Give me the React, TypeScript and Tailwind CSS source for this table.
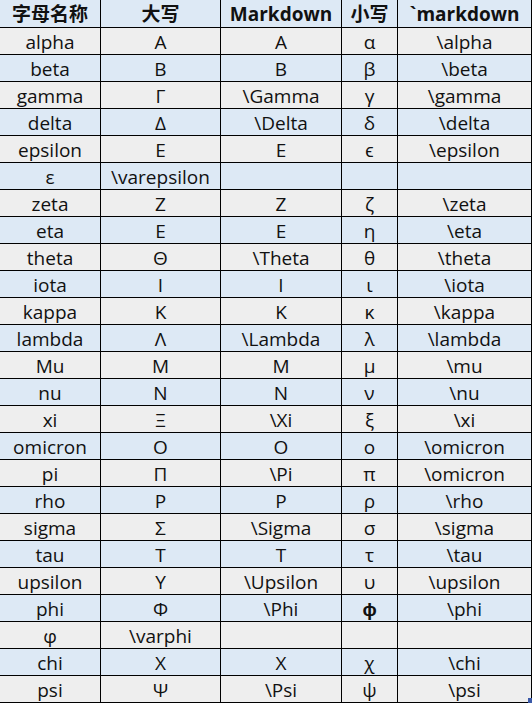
import React from "react";

type Row = [string, string, string, string, string];

const rows: Row[] = [
  ["alpha", "Α", "A", "α", "\\alpha"],
  ["beta", "Β", "B", "β", "\\beta"],
  ["gamma", "Γ", "\\Gamma", "γ", "\\gamma"],
  ["delta", "Δ", "\\Delta", "δ", "\\delta"],
  ["epsilon", "Ε", "E", "ϵ", "\\epsilon"],
  ["ε", "\\varepsilon", "", "", ""],
  ["zeta", "Ζ", "Z", "ζ", "\\zeta"],
  ["eta", "Ε", "E", "η", "\\eta"],
  ["theta", "Θ", "\\Theta", "θ", "\\theta"],
  ["iota", "Ι", "I", "ι", "\\iota"],
  ["kappa", "Κ", "K", "κ", "\\kappa"],
  ["lambda", "Λ", "\\Lambda", "λ", "\\lambda"],
  ["Mu", "Μ", "M", "μ", "\\mu"],
  ["nu", "Ν", "N", "ν", "\\nu"],
  ["xi", "Ξ", "\\Xi", "ξ", "\\xi"],
  ["omicron", "Ο", "O", "ο", "\\omicron"],
  ["pi", "Π", "\\Pi", "π", "\\omicron"],
  ["rho", "Ρ", "P", "ρ", "\\rho"],
  ["sigma", "Σ", "\\Sigma", "σ", "\\sigma"],
  ["tau", "Τ", "T", "τ", "\\tau"],
  ["upsilon", "Υ", "\\Upsilon", "υ", "\\upsilon"],
  ["phi", "Φ", "\\Phi", "ϕ", "\\phi"],
  ["φ", "\\varphi", "", "", ""],
  ["chi", "Χ", "X", "χ", "\\chi"],
  ["psi", "Ψ", "\\Psi", "ψ", "\\psi"],
];

const header: Row = ["字母名称", "大写", "Markdown", "小写", "`markdown"];

// column widths include the 1px right border
const cols = "grid grid-cols-[101px_120px_121px_56px_134px]";

export default function App() {
  return (
    <div
      className="relative w-[532px] h-[703px] overflow-hidden bg-[#eeeeee] text-[#111111]"
      style={{ fontFamily: '"Open Sans", "Noto Sans CJK SC", sans-serif' }}
    >
      {/* header */}
      <div className={`${cols} h-[28px] bg-[#dde9f5] border-b border-black`}>
        {header.map((h, i) => (
          <div
            key={i}
            className="text-center font-bold text-[19px] leading-[19px] pt-[5px] whitespace-nowrap border-r border-black"
          >
            {h}
          </div>
        ))}
      </div>

      {/* data rows */}
      {rows.map((r, ri) => (
        <div
          key={ri}
          className={`${cols} h-[27px] border-b border-black ${
            ri % 2 === 0 ? "bg-[#eeeeee]" : "bg-[#dde9f5]"
          }`}
        >
          {r.map((c, ci) => (
            <div
              key={ci}
              className={`text-center text-[19px] leading-[19px] pt-[5px] whitespace-nowrap border-r border-black ${
                ci === 3 && r[0] === "phi" ? "font-bold" : ""
              }`}
            >
              {c}
            </div>
          ))}
        </div>
      ))}

      {/* fill handle */}
      <span className="absolute right-0 bottom-0 w-[4px] h-[5px] bg-[#3b59a8]" />
    </div>
  );
}
